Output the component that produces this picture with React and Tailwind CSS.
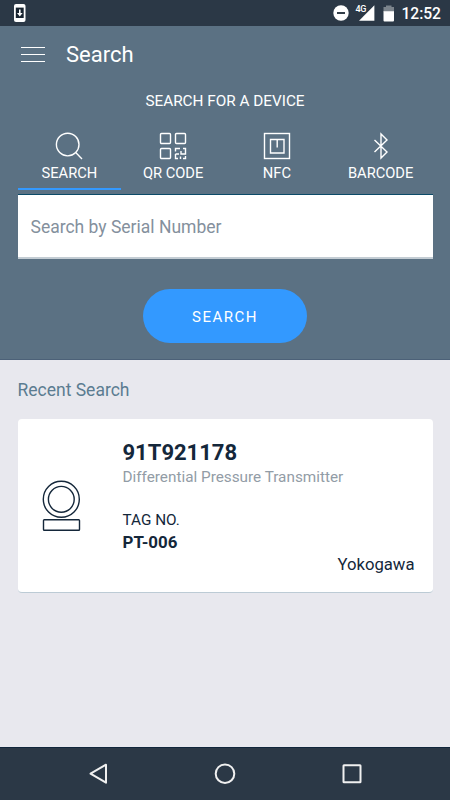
function StatusBar() {
  return (
    <div className="flex h-[26px] shrink-0 items-center bg-[#2b3846] pl-[13px] pr-[9px] text-white">
      <svg width="14" height="20" viewBox="0 0 14 20">
        <rect x="1" y="1" width="11.5" height="18" rx="2" fill="#fff" />
        <rect x="2.8" y="4.6" width="7.9" height="10.4" fill="#17232f" />
        <path d="M6 6.5h1.6v3.600h2L6.800 13.400 4 10.100h2z" fill="#fff" />
      </svg>
      <svg className="ml-auto" width="16" height="16" viewBox="0 0 16 16">
        <circle cx="8" cy="8" r="7.700" fill="#fff" />
        <path d="M4 8h8" stroke="#1c2935" strokeWidth="1.800" />
      </svg>
      <div className="ml-[6px] flex h-4 items-start">
        <span className="w-[10px] text-[9px] leading-[9px] font-medium tracking-[-0.400px]">4G</span>
        <svg className="-ml-[6px]" width="16" height="16" viewBox="0 0 16 16">
          <path d="M15.400 .3V15.700H0z" fill="#fff" />
        </svg>
      </div>
      <svg className="ml-2" width="12" height="17" viewBox="0 0 12 17">
        <path d="M3 .5h5.500v1.500h2.500V7H.5V2H3z" fill="#7b848c" />
        <path d="M.5 6.300H11V15.500a1 1 0 0 1-1 1H1.500a1 1 0 0 1-1-1z" fill="#fff" />
      </svg>
      <span className="ml-[6px] pt-[2px] text-[15.600px] leading-5 font-medium">12:52</span>
    </div>
  );
}

function SearchIcon() {
  return (
    <svg width="28" height="28" viewBox="0 0 28 28" fill="none" stroke="#fff" strokeWidth="1.400">
      <circle cx="12.700" cy="12.600" r="11.300" />
      <path d="M20.500 20.300l6.500 6.700" />
    </svg>
  );
}

function QrIcon() {
  return (
    <svg width="28" height="28" viewBox="0 0 28 28" fill="none" stroke="#fff" strokeWidth="1.400">
      <rect x="1.500" y="1.500" width="10" height="10" rx="1" />
      <rect x="16.500" y="1.500" width="10" height="10" rx="1" />
      <rect x="1.500" y="16.500" width="10" height="10" rx="1" />
      <path d="M16.500 19.500v-3H21M24 16.500h2.500v5.500h-4.500v-3M16.500 22v4.500h2.500M16.500 22H20M21.500 27v-2.500M24 26.500h2.500V24" />
    </svg>
  );
}

function NfcIcon() {
  return (
    <svg width="28" height="28" viewBox="0 0 28 28" fill="none" stroke="#fff" strokeWidth="1.400">
      <rect x="1.500" y="1.500" width="25" height="25" />
      <path d="M7.500 7.500h13.500v13.500h-13.500zM14.200 7.500v8" />
    </svg>
  );
}

function BluetoothIcon() {
  return (
    <svg width="28" height="28" viewBox="0 0 28 28" fill="none" stroke="#fff" strokeWidth="1.400">
      <path d="M7.500 8L20 20l-6 6V2l6 6L7.500 20" />
    </svg>
  );
}

const tabs = [
  { label: "SEARCH", Icon: SearchIcon },
  { label: "QR CODE", Icon: QrIcon },
  { label: "NFC", Icon: NfcIcon },
  { label: "BARCODE", Icon: BluetoothIcon },
];

function SearchPanel() {
  return (
    <section className="flex h-[334px] shrink-0 flex-col border-b border-[#4c6178] bg-[#5b7183] px-[17.500px] text-white">
      <header className="flex h-14 items-center pl-[3.500px]">
        <div className="flex w-6 flex-col gap-[6px]">
          <i className="h-px bg-white" />
          <i className="h-px bg-white" />
          <i className="h-px bg-white" />
        </div>
        <h1 className="ml-[21px] pt-[2px] text-[22px] leading-7">Search</h1>
      </header>
      <h2 className="mt-[9px] text-center text-[15.300px] leading-5">SEARCH FOR A DEVICE</h2>
      <nav className="mt-[21px] grid h-[58px] grid-cols-4">
        {tabs.map(({ label, Icon }, i) => (
          <button
            key={label}
            className={
              i === 0
                ? "flex flex-col items-center border-b-2 border-[#3399ff]"
                : "flex flex-col items-center"
            }
          >
            <Icon />
            <span className="mt-[3px] text-[14.700px] leading-5">{label}</span>
          </button>
        ))}
      </nav>
      <input
        placeholder="Search by Serial Number"
        className="mt-1 h-[65px] w-full border-t border-b-2 border-t-[#0b4a68] border-b-[#c3ccd3] bg-white px-[13px] pt-px text-[17.500px] placeholder:text-[#84909d]"
      />
      <button className="mt-[30px] h-[54px] w-[164px] self-center rounded-full bg-[#3399ff] pt-[2px] text-[15px] tracking-[1.500px]">
        SEARCH
      </button>
    </section>
  );
}

function DeviceCard() {
  return (
    <article className="mt-[17px] flex h-[174px] rounded-[4px] border-b border-[#bccbd5] bg-white pr-[18px] text-[#14273a]">
      <svg className="ml-[23.500px] mt-[60px] shrink-0" width="40" height="54" viewBox="0 0 40 54" fill="none" stroke="#14273a" strokeWidth="1.400">
        <circle cx="20.300" cy="20.300" r="18" />
        <circle cx="20.300" cy="20.300" r="12.900" />
        <rect x="2.500" y="40.700" width="36" height="10.500" rx="0.800" />
      </svg>
      <div className="ml-[41.500px] flex grow flex-col">
        <h3 className="mt-[20px] text-[22px] leading-7 font-bold">91T921178</h3>
        <p className="text-[15.300px] leading-5 text-[#929ca6]">Differential Pressure Transmitter</p>
        <p className="mt-[23px] text-[15.300px] leading-5">TAG NO.</p>
        <p className="mt-[2px] text-[16.900px] leading-5 font-bold">PT-006</p>
        <p className="mt-[3px] self-end text-[16.700px] leading-5">Yokogawa</p>
      </div>
    </article>
  );
}

function NavBar() {
  return (
    <footer className="flex h-[53px] shrink-0 items-center justify-between border-t border-[#11263c] bg-[#2b3846] px-[87px]">
      <svg width="22" height="22" viewBox="0 0 22 22" fill="none" stroke="#f0f0f0" strokeWidth="2" strokeLinejoin="round">
        <path d="M19 1.700v18L3.500 10.700z" />
      </svg>
      <svg width="22" height="22" viewBox="0 0 22 22" fill="none" stroke="#f0f0f0" strokeWidth="2">
        <circle cx="11" cy="10.700" r="9.300" />
      </svg>
      <svg width="22" height="22" viewBox="0 0 22 22" fill="none" stroke="#f0f0f0" strokeWidth="2">
        <rect x="2.500" y="2.300" width="17" height="17" rx="0.500" />
      </svg>
    </footer>
  );
}

export default function App() {
  return (
    <div className="flex h-[800px] w-[450px] flex-col overflow-hidden bg-[#e8e8ee] font-['Roboto',sans-serif]">
      <StatusBar />
      <SearchPanel />
      <main className="grow px-[17.500px] pt-[18px]">
        <h2 className="text-[17.500px] leading-6 text-[#5b7c91]">Recent Search</h2>
        <DeviceCard />
      </main>
      <NavBar />
    </div>
  );
}
